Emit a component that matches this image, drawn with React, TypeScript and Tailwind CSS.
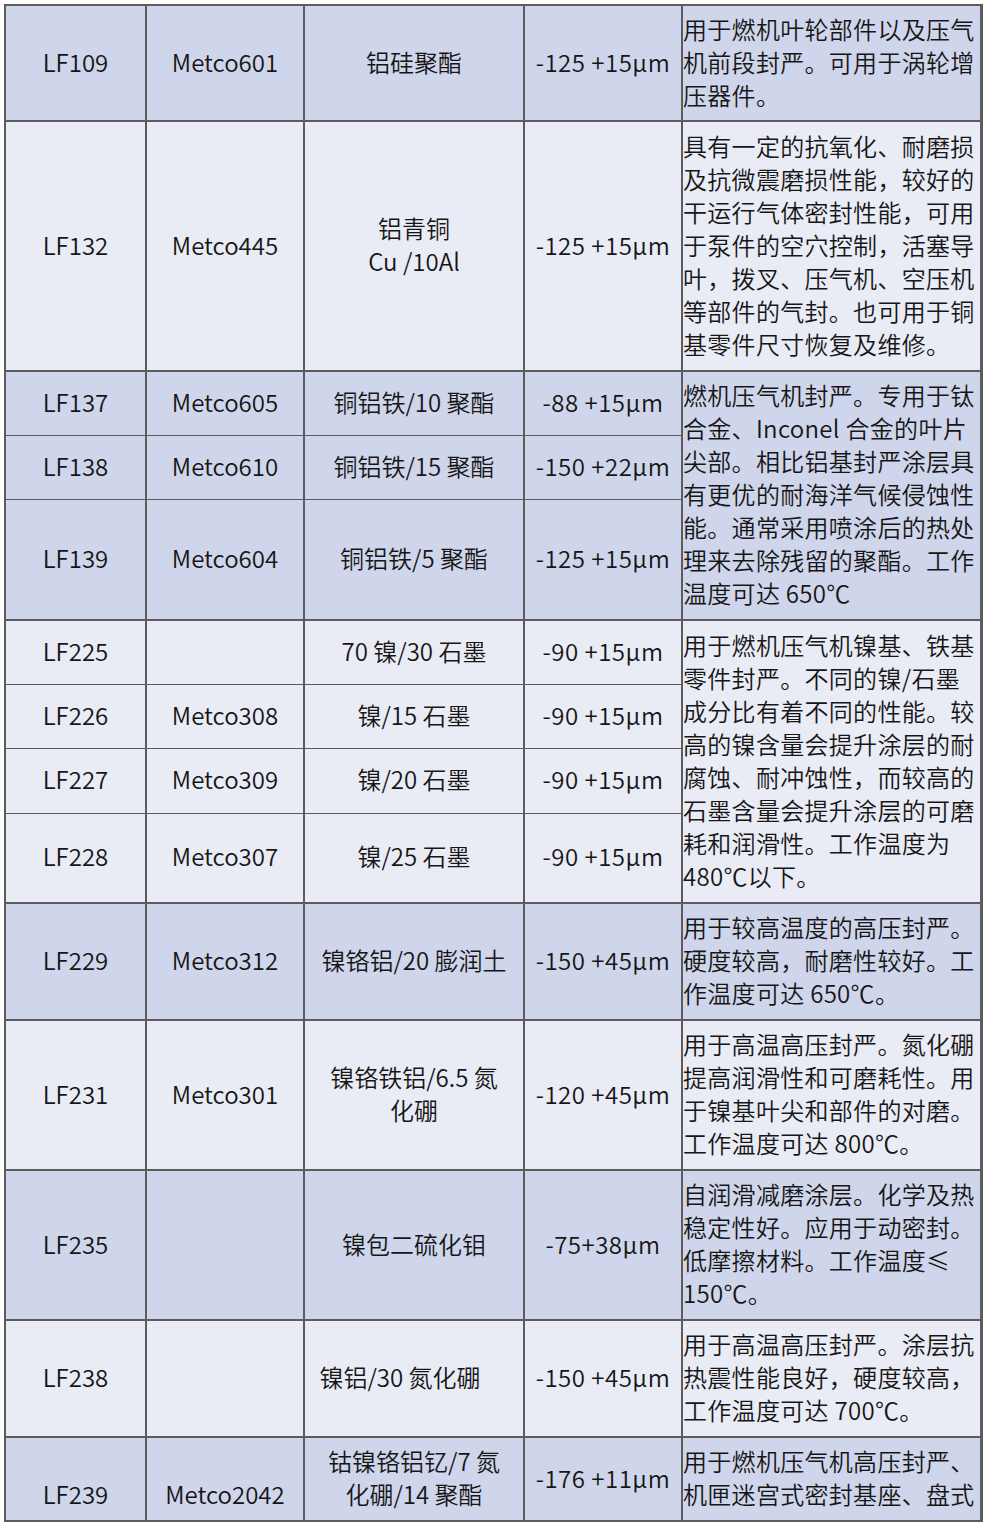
import React from "react";

type Row = { id: string[]; m: string[]; c: string[]; s: string[]; h: string; cx?: string };
type Group = { bg: string; desc: string[]; rows: Row[] };

const DARK = "bg-[#cfd5ea]";
const LIGHT = "bg-[#e9ebf5]";

const groups: Group[] = [
  {
    bg: DARK,
    desc: ["用于燃机叶轮部件以及压气", "机前段封严。可用于涡轮增", "压器件。"],
    rows: [{ id: ["LF109"], m: ["Metco601"], c: ["铝硅聚酯"], s: ["-125 +15µm"], h: "h-[116px]" }],
  },
  {
    bg: LIGHT,
    desc: [
      "具有一定的抗氧化、耐磨损",
      "及抗微震磨损性能，较好的",
      "干运行气体密封性能，可用",
      "于泵件的空穴控制，活塞导",
      "叶，拨叉、压气机、空压机",
      "等部件的气封。也可用于铜",
      "基零件尺寸恢复及维修。",
    ],
    rows: [{ id: ["LF132"], m: ["Metco445"], c: ["铝青铜", "Cu /10Al"], s: ["-125 +15µm"], h: "h-[250px]" }],
  },
  {
    bg: DARK,
    desc: [
      "燃机压气机封严。专用于钛",
      "合金、Inconel 合金的叶片",
      "尖部。相比铝基封严涂层具",
      "有更优的耐海洋气候侵蚀性",
      "能。通常采用喷涂后的热处",
      "理来去除残留的聚酯。工作",
      "温度可达 650℃",
    ],
    rows: [
      { id: ["LF137"], m: ["Metco605"], c: ["铜铝铁/10 聚酯"], s: ["-88 +15µm"], h: "h-[64px]" },
      { id: ["LF138"], m: ["Metco610"], c: ["铜铝铁/15 聚酯"], s: ["-150 +22µm"], h: "h-[64px]" },
      { id: ["LF139"], m: ["Metco604"], c: ["铜铝铁/5 聚酯"], s: ["-125 +15µm"], h: "h-[121px]" },
    ],
  },
  {
    bg: LIGHT,
    desc: [
      "用于燃机压气机镍基、铁基",
      "零件封严。不同的镍/石墨",
      "成分比有着不同的性能。较",
      "高的镍含量会提升涂层的耐",
      "腐蚀、耐冲蚀性，而较高的",
      "石墨含量会提升涂层的可磨",
      "耗和润滑性。工作温度为",
      "480℃以下。",
    ],
    rows: [
      { id: ["LF225"], m: [""], c: ["70 镍/30 石墨"], s: ["-90 +15µm"], h: "h-[64px]" },
      { id: ["LF226"], m: ["Metco308"], c: ["镍/15 石墨"], s: ["-90 +15µm"], h: "h-[64px]" },
      { id: ["LF227"], m: ["Metco309"], c: ["镍/20 石墨"], s: ["-90 +15µm"], h: "h-[65px]" },
      { id: ["LF228"], m: ["Metco307"], c: ["镍/25 石墨"], s: ["-90 +15µm"], h: "h-[90px]" },
    ],
  },
  {
    bg: DARK,
    desc: ["用于较高温度的高压封严。", "硬度较高，耐磨性较好。工", "作温度可达 650℃。"],
    rows: [{ id: ["LF229"], m: ["Metco312"], c: ["镍铬铝/20 膨润土"], s: ["-150 +45µm"], h: "h-[117px]" }],
  },
  {
    bg: LIGHT,
    desc: ["用于高温高压封严。氮化硼", "提高润滑性和可磨耗性。用", "于镍基叶尖和部件的对磨。", "工作温度可达 800℃。"],
    rows: [{ id: ["LF231"], m: ["Metco301"], c: ["镍铬铁铝/6.5 氮", "化硼"], s: ["-120 +45µm"], h: "h-[150px]" }],
  },
  {
    bg: DARK,
    desc: ["自润滑减磨涂层。化学及热", "稳定性好。应用于动密封。", "低摩擦材料。工作温度≤", "150℃。"],
    rows: [{ id: ["LF235"], m: [""], c: ["镍包二硫化钼"], s: ["-75+38µm"], h: "h-[150px]" }],
  },
  {
    bg: LIGHT,
    desc: ["用于高温高压封严。涂层抗", "热震性能良好，硬度较高，", "工作温度可达 700℃。"],
    rows: [
      { id: ["LF238"], m: [""], c: ["镍铝/30 氮化硼"], s: ["-150 +45µm"], h: "h-[117px]", cx: "pr-[28px]" },
    ],
  },
  {
    bg: DARK,
    desc: ["用于燃机压气机高压封严、", "机匣迷宫式密封基座、盘式"],
    rows: [
      {
        id: ["\u00a0", "LF239"],
        m: ["\u00a0", "Metco2042"],
        c: ["钴镍铬铝钇/7 氮", "化硼/14 聚酯"],
        s: ["-176 +11µm"],
        h: "h-[84px]",
      },
    ],
  },
];

function Lines({ lines }: { lines: string[] }) {
  return (
    <>
      {lines.map((l, i) => (
        <span key={i} className="block whitespace-nowrap">
          {l}
        </span>
      ))}
    </>
  );
}

export default function App() {
  return (
    <div className="min-h-[1531px] w-[991px] bg-white pl-[4px] pt-[4px] text-[#161616]">
      <table
        className="w-[978px] table-fixed border-collapse border-2 border-r-[3px] border-[#5c5c5c] text-[24px] font-[350] leading-[33px]"
        style={{ fontFamily: '"Noto Sans CJK SC", "Noto Sans", sans-serif' }}
      >
        <colgroup>
          <col className="w-[141px]" />
          <col className="w-[158px]" />
          <col className="w-[220px]" />
          <col className="w-[158px]" />
          <col className="w-[299px]" />
        </colgroup>
        <tbody>
          {groups.map((g, gi) =>
            g.rows.map((r, ri) => {
              const top = ri === 0 ? "border-t-2" : "border-t";
              const cell = `${top} border-x-2 border-b border-[#5c5c5c] px-0 pt-0 pb-[4px] text-center align-middle`;
              return (
                <tr key={`${gi}-${ri}`} className={g.bg}>
                  <td className={`${cell} ${r.h}`}>
                    <Lines lines={r.id} />
                  </td>
                  <td className={cell}>
                    <Lines lines={r.m} />
                  </td>
                  <td className={cell}>
                    <div className={r.cx ?? ""}>
                      <Lines lines={r.c} />
                    </div>
                  </td>
                  <td className={`${cell} tracking-[0.5px]`}>
                    <Lines lines={r.s} />
                  </td>
                  {ri === 0 && (
                    <td
                      rowSpan={g.rows.length}
                      className="border-2 border-[#5c5c5c] px-0 pt-0 pb-[4px] text-left align-middle tracking-[0.3px]"
                    >
                      <Lines lines={g.desc} />
                    </td>
                  )}
                </tr>
              );
            })
          )}
        </tbody>
      </table>
    </div>
  );
}
